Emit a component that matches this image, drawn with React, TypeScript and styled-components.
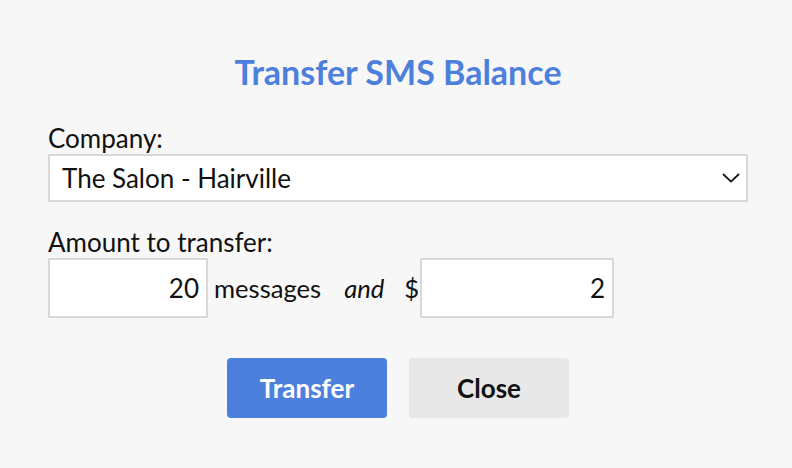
import styled, { createGlobalStyle } from 'styled-components'

const GlobalStyle = createGlobalStyle`
	html, body {
		margin: 0;
		padding: 0;
		background: #f7f7f7;
	}
	body {
		font-family: Lato, 'Open Sans', sans-serif;
		color: #111;
	}
`

const DialogStyled = styled.div`
	width: 792px;
	height: 468px;
	box-sizing: border-box;
	padding: 52px 44px 0 48px;
	background: #f7f7f7;
`
const Title = styled.h1`
	margin: 0 0 32px;
	text-align: center;
	font-size: 34px;
	font-weight: 700;
	color: #4c80dc;
	line-height: 40px;
`
const Field = styled.div`
	display: flex;
	flex-direction: column;
	gap: 2px;
	margin-bottom: 26px;
`
const Label = styled.label`
	font-size: 26px;
	line-height: 28px;
	color: #111;
`
const SelectBox = styled.div`
	height: 48px;
	box-sizing: border-box;
	border: 2px solid #d8d8d8;
	background: #fff;
	display: flex;
	align-items: center;
	justify-content: space-between;
	padding: 0 6px 0 12px;
	font-size: 26px;
`
const AmountRow = styled.div`
	display: flex;
	align-items: center;
	font-size: 25.6px;
`
const NumberBox = styled.div<{ width: number }>`
	flex: none;
	width: ${(p) => p.width}px;
	height: 60px;
	box-sizing: border-box;
	border: 2px solid #d8d8d8;
	background: #fff;
	display: flex;
	align-items: center;
	justify-content: flex-end;
	padding-right: 7px;
	font-size: 26px;
`
const Word = styled.span<{ italic?: boolean; gap: number }>`
	margin-left: ${(p) => p.gap}px;
	font-style: ${(p) => (p.italic ? 'italic' : 'normal')};
`
const DollarBox = styled(NumberBox)`
	margin-left: 1px;
`
const Buttons = styled.div`
	display: flex;
	justify-content: center;
	gap: 22px;
	padding-top: 14px;
`
const Button = styled.button<{ primary?: boolean }>`
	width: 160px;
	height: 60px;
	border: none;
	border-radius: 4px;
	font-family: Lato, sans-serif;
	font-size: 26px;
	font-weight: 700;
	background: ${(p) => (p.primary ? '#4d80dd' : '#e8e8e8')};
	color: ${(p) => (p.primary ? '#fff' : '#111')};
`

const Chevron = () => (
	<svg width='18' height='10' viewBox='0 0 18 10'>
		<path d='M1 1 L9 8.6 L17 1' fill='none' stroke='#111' strokeWidth='1.8' />
	</svg>
)

const App = () => {
	return (
		<DialogStyled>
			<GlobalStyle />
			<Title>Transfer SMS Balance</Title>
			<Field>
				<Label>Company:</Label>
				<SelectBox>
					<span>The Salon - Hairville</span>
					<Chevron />
				</SelectBox>
			</Field>
			<Field>
				<Label>Amount to transfer:</Label>
				<AmountRow>
					<NumberBox width={160}>20</NumberBox>
					<Word gap={6}>messages</Word>
					<Word gap={23} italic>
						and
					</Word>
					<Word gap={20}>$</Word>
					<DollarBox width={194}>2</DollarBox>
				</AmountRow>
			</Field>
			<Buttons>
				<Button primary>Transfer</Button>
				<Button>Close</Button>
			</Buttons>
		</DialogStyled>
	)
}

export default App
